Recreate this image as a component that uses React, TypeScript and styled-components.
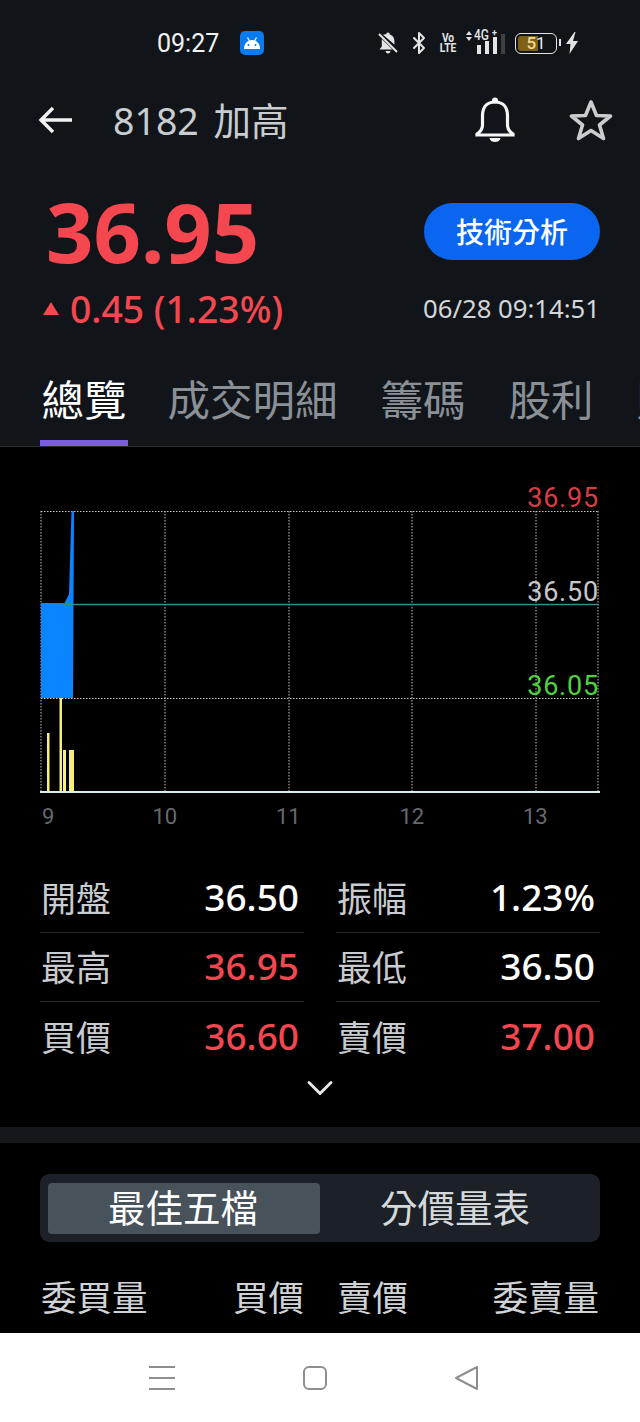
import styled, { createGlobalStyle } from 'styled-components';
import { Bluetooth, ChevronDown } from 'lucide-react';

const tabs = ['總覽', '成交明細', '籌碼', '股利', '財務'];
const gridX = [41, 165, 289, 412, 536, 598];
const timeLabels = ['9', '10', '11', '12', '13'];
const volumeBars = [
  { x: 47, w: 2.5, top: 733 },
  { x: 59.5, w: 2.5, top: 698 },
  { x: 63, w: 3, top: 750 },
  { x: 69, w: 5, top: 750 },
];
const statRows = [
  [
    { label: '開盤', value: '36.50', up: false },
    { label: '振幅', value: '1.23%', up: false },
  ],
  [
    { label: '最高', value: '36.95', up: true },
    { label: '最低', value: '36.50', up: false },
  ],
  [
    { label: '買價', value: '36.60', up: true },
    { label: '賣價', value: '37.00', up: true },
  ],
];

export default function App() {
  return (
    <Page>
      <GlobalStyle />
      <Header>
        <StatusBar>
          <Clock>09:27</Clock>
          <AppBadge>
            <svg width='18' height='12' viewBox='0 0 18 12' fill='#fff'>
              <path d='M1 12 C1 6.5 4.5 3 9 3 C13.5 3 17 6.5 17 12 Z' />
              <path d='M4.5 0.5 L6.5 4 M13.5 0.5 L11.5 4' stroke='#fff' strokeWidth='1.2' />
              <circle cx='5.5' cy='8' r='1' fill='#0a7cf0' />
              <circle cx='12.5' cy='8' r='1' fill='#0a7cf0' />
            </svg>
          </AppBadge>
          <StatusIcons>
            <svg width='22' height='24' viewBox='0 0 22 24' fill='#e4e4e4'>
              <path d='M11 1.5 C12.2 1.5 12.8 2.3 12.8 3.4 C16 4.3 17.4 7 17.4 10 L17.4 13.5 L6 3.8 C7 3.4 8.2 3.2 9.2 3.4 C9.2 2.3 9.8 1.5 11 1.5 Z M4.8 8 L15.5 18.5 L2.5 18.5 L4.8 15.5 Z M8.5 20 L13.5 20 C13.3 21.6 12.3 22.5 11 22.5 C9.7 22.5 8.7 21.6 8.5 20 Z' />
              <path d='M2 3 L20 21' stroke='#e4e4e4' strokeWidth='2' />
            </svg>
            <Bluetooth size={24} strokeWidth={2} color='#e4e4e4' />
            <VoLte>
              <span>Vo</span>
              <span>LTE</span>
            </VoLte>
            <Network>
              <NetworkLabel>
                <svg width='6' height='10' viewBox='0 0 6 10' fill='#e4e4e4'>
                  <path d='M3 0 L6 4 H0 Z M0 6 H6 L3 10 Z' />
                </svg>
                <NetworkText>4G</NetworkText>
                <NetworkPlus>+</NetworkPlus>
              </NetworkLabel>
              <Signal>
                <SignalBar $h={9} />
                <SignalBar $h={13} />
                <SignalBar $h={17} />
                <SignalBar $h={20} $dim />
              </Signal>
            </Network>
            <Battery>
              <BatteryLevel />
              <BatteryText>
                <b>5</b>1
              </BatteryText>
              <BatteryCap />
            </Battery>
            <svg width='14' height='24' viewBox='0 0 14 24' fill='#e4e4e4'>
              <path d='M9.5 1 L1 13 L5.5 13 L4.5 23 L13 10 L8 10 L10.5 1 Z' />
            </svg>
          </StatusIcons>
        </StatusBar>

        <NavBar>
          <svg width='36' height='28' viewBox='0 0 36 28' fill='none' stroke='#f2f2f2' strokeWidth='3.4'>
            <path d='M35 14 H4 M16 2 L4 14 L16 26' />
          </svg>
          <Title>8182 加高</Title>
          <NavActions>
            <svg width='40' height='46' viewBox='0 0 40 46' fill='none' stroke='#f5f5f5' strokeWidth='3.2'>
              <circle cx='20' cy='3.5' r='3' fill='#f5f5f5' stroke='none' />
              <path d='M20 5 C11 5 7.5 11 7.5 19 V28 C7.5 33 5 35 2 37 V38 H38 V37 C35 35 32.5 33 32.5 28 V19 C32.5 11 29 5 20 5 Z' />
              <path d='M14.5 41 A5.6 5 0 0 0 25.5 41 Z' fill='#f5f5f5' stroke='none' />
            </svg>
            <svg width='44' height='43' viewBox='0 0 44 43' fill='none' stroke='#c9cdd0' strokeWidth='3.6' strokeLinejoin='round'>
              <polygon points='22,3 27.5,16.5 41.5,17 30.5,26 34.5,39.5 22,31.5 9.5,39.5 13.5,26 2.5,17 16.5,16.5' />
            </svg>
          </NavActions>
        </NavBar>

        <QuoteRow>
          <Price>36.95</Price>
          <AnalysisButton>技術分析</AnalysisButton>
        </QuoteRow>
        <ChangeRow>
          <Change>
            <UpMark />
            0.45 (1.23%)
          </Change>
          <QuoteTime>06/28 09:14:51</QuoteTime>
        </ChangeRow>

        <TabBar>
          {tabs.map((tab, idx) => (
            <Tab key={tab} $active={idx === 0}>
              {tab}
            </Tab>
          ))}
        </TabBar>
      </Header>

      <Body>
        <ChartArea>
          <svg width='640' height='392' viewBox='0 447 640 392'>
            {gridX.map((x) => (
              <line key={x} x1={x} x2={x} y1='511' y2='792' stroke='#c4c4c4' strokeDasharray='1.5 1.5' />
            ))}
            <line x1='41' x2='599' y1='511.5' y2='511.5' stroke='#c4c4c4' strokeDasharray='1.5 1.5' />
            <line x1='41' x2='599' y1='698.5' y2='698.5' stroke='#c4c4c4' strokeDasharray='1.5 1.5' />
            <polygon points='41,604 64,604 69,594 71.5,511 74,511 73,698 41,698' fill='#0a84ff' />
            <line x1='41' x2='599' y1='604.5' y2='604.5' stroke='#2f8f8c' strokeWidth='1.5' />
            <rect x='41' y='603' width='23' height='2' fill='#0a84ff' />
            {volumeBars.map((bar) => (
              <rect key={bar.x} x={bar.x} y={bar.top} width={bar.w} height={792 - bar.top} fill='#f4f07a' />
            ))}
            <line x1='40' x2='600' y1='792' y2='792' stroke='#d8f0f0' strokeWidth='2' />
          </svg>
          <PriceLabel $y={36} $color='#d93c42'>36.95</PriceLabel>
          <PriceLabel $y={130} $color='#c8c8c8'>36.50</PriceLabel>
          <PriceLabel $y={224} $color='#50d23f'>36.05</PriceLabel>
          <TimeAxis>
            {timeLabels.map((label) => (
              <TimeLabel key={label}>{label}</TimeLabel>
            ))}
          </TimeAxis>
        </ChartArea>

        <Stats>
          {statRows.map((row, idx) => (
            <StatRow key={idx}>
              {row.map((stat) => (
                <StatCell key={stat.label} $last={idx === statRows.length - 1}>
                  <StatLabel>{stat.label}</StatLabel>
                  <StatValue $up={stat.up}>{stat.value}</StatValue>
                </StatCell>
              ))}
            </StatRow>
          ))}
        </Stats>
        <MoreRow>
          <ChevronDown size={44} strokeWidth={1.6} color='#e8e8e8' />
        </MoreRow>

        <SectionGap />

        <Segment>
          <SegmentItem $active>最佳五檔</SegmentItem>
          <SegmentItem>分價量表</SegmentItem>
        </Segment>

        <OrderHead>
          <OrderSide>
            <span>委買量</span>
            <span>買價</span>
          </OrderSide>
          <OrderSide>
            <span>賣價</span>
            <span>委賣量</span>
          </OrderSide>
        </OrderHead>
      </Body>

      <SystemNav>
        <svg width='28' height='26' viewBox='0 0 28 26' stroke='#8e8e8e' strokeWidth='2'>
          <path d='M1 2 H27 M1 13 H27 M1 24 H27' />
        </svg>
        <svg width='26' height='26' viewBox='0 0 26 26' fill='none' stroke='#8e8e8e' strokeWidth='2'>
          <rect x='2' y='2' width='22' height='22' rx='5' />
        </svg>
        <svg width='26' height='26' viewBox='0 0 26 26' fill='none' stroke='#8e8e8e' strokeWidth='2' strokeLinejoin='round'>
          <path d='M23 2 V24 L2 13 Z' />
        </svg>
      </SystemNav>
    </Page>
  );
}

const GlobalStyle = createGlobalStyle`
  html, body {
    margin: 0;
    padding: 0;
    background: #000;
  }
  * {
    box-sizing: border-box;
  }
`;

const Page = styled.div`
  width: 640px;
  height: 1422px;
  overflow: hidden;
  display: flex;
  flex-direction: column;
  background: #000;
  font-family: 'Noto Sans', 'Noto Sans CJK TC', sans-serif;
`;

const Header = styled.header`
  height: 447px;
  flex: none;
  background: #11151a;
  border-bottom: 1px solid #2b2e32;
`;

const StatusBar = styled.div`
  height: 86px;
  padding-left: 157px;
  display: flex;
  align-items: center;
`;

const Clock = styled.span`
  width: 83px;
  font-family: Roboto, sans-serif;
  font-size: 25px;
  color: #f2f2f2;
`;

const AppBadge = styled.span`
  width: 24px;
  height: 24px;
  border-radius: 5px;
  background: #0a7cf0;
  display: flex;
  align-items: center;
  justify-content: center;
`;

const StatusIcons = styled.div`
  margin-left: 113px;
  display: flex;
  align-items: center;
  gap: 8px;
`;

const VoLte = styled.span`
  width: 14px;
  margin-left: 2px;
  display: flex;
  flex-direction: column;
  align-items: center;
  font-family: Roboto, sans-serif;
  font-size: 13px;
  font-weight: 700;
  line-height: 10.5px;
  color: #e4e4e4;
  transform: scaleX(0.78);
`;

const Network = styled.span`
  position: relative;
  width: 39px;
  height: 24px;
  margin-left: 3px;
`;

const NetworkLabel = styled.span`
  position: absolute;
  left: 0;
  top: -2px;
  display: flex;
  align-items: center;
  gap: 2px;
  color: #e4e4e4;
`;

const NetworkText = styled.span`
  font-family: Roboto, sans-serif;
  font-size: 14px;
  line-height: 13px;
  font-weight: 500;
  width: 16px;
  transform: scaleX(0.85);
  transform-origin: left;
`;

const NetworkPlus = styled.span`
  font-family: Roboto, sans-serif;
  font-size: 9px;
  line-height: 9px;
  font-weight: 700;
  margin-top: -4px;
`;

const Signal = styled.span`
  position: absolute;
  right: 0;
  bottom: 1px;
  display: flex;
  align-items: flex-end;
  gap: 3.5px;
`;

const SignalBar = styled.i<{ $h: number; $dim?: boolean }>`
  width: 4.5px;
  height: ${(p) => p.$h}px;
  background: ${(p) => (p.$dim ? '#3d4144' : '#e4e4e4')};
`;

const Battery = styled.span`
  position: relative;
  width: 42px;
  height: 21px;
  margin-left: 2px;
  border: 1.5px solid #e4e4e4;
  border-radius: 6px;
  padding: 2px;
  display: flex;
`;

const BatteryLevel = styled.i`
  width: 55%;
  background: #7f6116;
  border-radius: 3px 0 0 3px;
`;

const BatteryText = styled.span`
  position: absolute;
  left: 0;
  right: 0;
  top: 0;
  text-align: center;
  font-family: Roboto, sans-serif;
  font-size: 17px;
  line-height: 18px;
  font-weight: 400;
  color: #e8e8e8;

  b {
    font-weight: 500;
    color: #f0dc90;
  }
`;

const BatteryCap = styled.i`
  position: absolute;
  right: -5px;
  top: 5.5px;
  width: 2px;
  height: 7px;
  background: #e4e4e4;
`;

const NavBar = styled.div`
  height: 68px;
  padding-left: 37px;
  display: flex;
  align-items: center;
`;

const Title = styled.h1`
  margin: 0 0 4px 40px;
  font-size: 37.5px;
  font-weight: 400;
  word-spacing: 5px;
  color: #c9cdd0;
`;

const NavActions = styled.div`
  margin-left: auto;
  padding-right: 27px;
  display: flex;
  align-items: center;
  gap: 54px;
`;

const QuoteRow = styled.div`
  height: 88px;
  margin-top: 33px;
  padding: 0 40px 0 46px;
  display: flex;
  align-items: center;
  justify-content: space-between;
`;

const Price = styled.div`
  font-size: 83px;
  line-height: 88px;
  font-weight: 700;
  color: #f5474f;
`;

const AnalysisButton = styled.button`
  width: 176px;
  height: 57px;
  border: 0;
  border-radius: 29px;
  background: #0a66f0;
  color: #fff;
  font-family: inherit;
  font-size: 28px;
  font-weight: 500;
`;

const ChangeRow = styled.div`
  height: 50px;
  margin-top: 8px;
  margin-bottom: 1px;
  padding: 0 40px 0 43px;
  display: flex;
  align-items: center;
  justify-content: space-between;
`;

const Change = styled.div`
  display: flex;
  align-items: center;
  font-size: 37.3px;
  font-weight: 500;
  color: #f5474f;
`;

const UpMark = styled.i`
  width: 0;
  height: 0;
  margin-right: 11px;
  border-left: 8px solid transparent;
  border-right: 8px solid transparent;
  border-bottom: 13px solid #f5474f;
`;

const QuoteTime = styled.div`
  font-size: 25.7px;
  color: #d4d7da;
`;

const TabBar = styled.nav`
  height: 113px;
  margin-top: 1px;
  padding-left: 40px;
  display: flex;
  gap: 40px;
  white-space: nowrap;
  overflow: hidden;
`;

const Tab = styled.div<{ $active?: boolean }>`
  flex: none;
  height: 112px;
  padding: 36px 1.5px 0;
  margin-right: ${(p) => (p.$active ? '-2px' : '0')};
  line-height: 60px;
  font-size: 42.5px;
  color: ${(p) => (p.$active ? '#ffffff' : '#8a9096')};
  border-bottom: 6px solid ${(p) => (p.$active ? '#7a5ce0' : 'transparent')};
`;

const Body = styled.main`
  flex: 1;
  min-height: 0;
  overflow: hidden;
  background: #000;
`;

const ChartArea = styled.div`
  position: relative;
  height: 392px;

  svg {
    display: block;
  }
`;

const PriceLabel = styled.span<{ $y: number; $color: string }>`
  position: absolute;
  right: 41px;
  top: ${(p) => p.$y}px;
  font-family: Roboto, sans-serif;
  font-size: 27px;
  letter-spacing: 0.8px;
  line-height: 30px;
  color: ${(p) => p.$color};
`;

const TimeAxis = styled.div`
  position: absolute;
  left: 0;
  top: 357px;
  display: grid;
  grid-template-columns: 103px repeat(4, 123.5px);
`;

const TimeLabel = styled.span`
  text-align: center;
  font-family: Roboto, sans-serif;
  font-size: 22px;
  line-height: 26px;
  color: #66696c;

  &:first-child {
    text-align: left;
    padding-left: 42px;
  }
`;

const Stats = styled.section`
  margin-top: 24px;
  padding: 0 40px;
`;

const StatRow = styled.div`
  display: grid;
  grid-template-columns: 1fr 1fr;
  column-gap: 32px;
`;

const StatCell = styled.div<{ $last?: boolean }>`
  height: 69.5px;
  padding: 0 5px 2px 1px;
  display: flex;
  align-items: center;
  justify-content: space-between;
  border-bottom: 1.5px solid ${(p) => (p.$last ? 'transparent' : '#26282b')};
`;

const StatLabel = styled.span`
  font-size: 35px;
  color: #c8ccd0;
`;

const StatValue = styled.span<{ $up?: boolean }>`
  font-size: 37px;
  font-weight: 500;
  color: ${(p) => (p.$up ? '#f5474f' : '#ffffff')};
`;

const MoreRow = styled.div`
  height: 33.5px;
  display: flex;
  align-items: center;
  justify-content: center;
`;

const SectionGap = styled.div`
  height: 16px;
  margin-top: 22px;
  background: #14181c;
`;

const Segment = styled.div`
  height: 68px;
  margin: 31px 40px 0;
  padding: 9px 8px 8px;
  border-radius: 9px;
  background: #1b2127;
  display: grid;
  grid-template-columns: 272px 1fr;
`;

const SegmentItem = styled.div<{ $active?: boolean }>`
  border-radius: 4px;
  background: ${(p) => (p.$active ? '#48525a' : 'transparent')};
  color: ${(p) => (p.$active ? '#ffffff' : '#d6d9dc')};
  font-size: 37.5px;
  line-height: 50px;
  text-align: center;
  padding-right: 2px;
`;

const OrderHead = styled.div`
  margin-top: 30px;
  padding: 0 41px;
  display: grid;
  grid-template-columns: 263px 1fr;
  column-gap: 33px;
  font-size: 35.5px;
  line-height: 50px;
  color: #d0d3d6;
`;

const OrderSide = styled.div`
  display: flex;
  justify-content: space-between;
`;

const SystemNav = styled.footer`
  height: 89px;
  flex: none;
  background: #fff;
  padding: 0 160px 0 148px;
  display: flex;
  align-items: center;
  justify-content: space-between;
`;
